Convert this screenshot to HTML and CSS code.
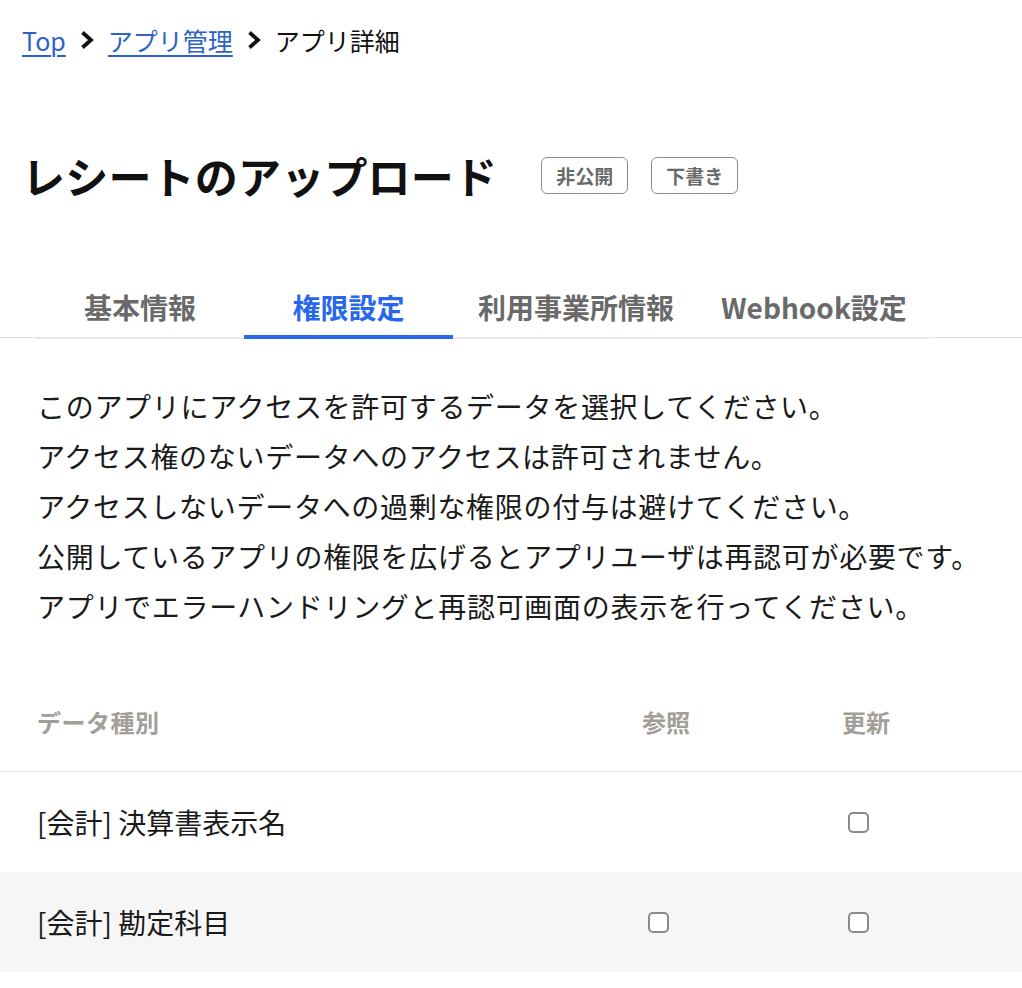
FILE: index.html
```html
<!DOCTYPE html>
<html lang="ja">
<head>
<meta charset="utf-8">
<link rel="stylesheet" href="styles.css">
</head>
<body>
<nav class="breadcrumb">
  <a class="crumb-link" href="#">Top</a>
  <svg class="chev" width="14" height="18" viewBox="0 0 14 18"><polyline points="2.5,1.5 11,9 2.5,16.5" fill="none" stroke="#111" stroke-width="3.8" stroke-linejoin="miter"/></svg>
  <a class="crumb-link" href="#">アプリ管理</a>
  <svg class="chev" width="14" height="18" viewBox="0 0 14 18"><polyline points="2.5,1.5 11,9 2.5,16.5" fill="none" stroke="#111" stroke-width="3.8" stroke-linejoin="miter"/></svg>
  <span class="crumb-current">アプリ詳細</span>
</nav>

<header class="page-header">
  <h1 class="title">レシートのアップロード</h1>
  <div class="badges">
    <span class="badge">非公開</span>
    <span class="badge">下書き</span>
  </div>
</header>

<div class="tabs-wrap">
  <div class="tabs">
    <div class="tab">基本情報</div>
    <div class="tab active">権限設定</div>
    <div class="tab">利用事業所情報</div>
    <div class="tab">Webhook設定</div>
  </div>
</div>

<div class="desc">
  <p>このアプリにアクセスを許可するデータを選択してください。</p>
  <p>アクセス権のないデータへのアクセスは許可されません。</p>
  <p>アクセスしないデータへの過剰な権限の付与は避けてください。</p>
  <p>公開しているアプリの権限を広げるとアプリユーザは再認可が必要です。</p>
  <p>アプリでエラーハンドリングと再認可画面の表示を行ってください。</p>
</div>

<div class="table">
  <div class="row head">
    <div class="cell name">データ種別</div>
    <div class="cell col">参照</div>
    <div class="cell col">更新</div>
  </div>
  <div class="row">
    <div class="cell name">[会計] 決算書表示名</div>
    <div class="cell col check"></div>
    <div class="cell col check"><input type="checkbox" class="cb"></div>
  </div>
  <div class="row alt">
    <div class="cell name">[会計] 勘定科目</div>
    <div class="cell col check"><input type="checkbox" class="cb"></div>
    <div class="cell col check"><input type="checkbox" class="cb"></div>
  </div>
</div>
</body>
</html>
```

FILE: styles.css
```css
* { box-sizing: border-box; }
body {
  margin: 0;
  background: #fff;
  color: #111;
  font-family: "Noto Sans CJK JP", "Noto Sans", sans-serif;
}
.breadcrumb {
  display: flex;
  align-items: center;
  gap: 14px;
  padding: 22px 22px 0;
  height: 58px;
  font-size: 25px;
  line-height: 36px;
}
.crumb-link {
  color: #2f62c8;
  text-decoration: underline;
  text-underline-offset: 4px;
  text-decoration-thickness: 2px;
}
.crumb-current { color: #111; }
.chev { display: block; flex: none; }

.page-header {
  display: flex;
  align-items: center;
  margin-top: 87px;
  padding-left: 22px;
  height: 60px;
}
.title {
  margin: 0;
  font-size: 43px;
  font-weight: 700;
  line-height: 60px;
  letter-spacing: 0.2px;
}
.badges {
  display: flex;
  gap: 23px;
  margin-left: 44px;
}
.badge {
  display: block;
  height: 37px;
  line-height: 35px;
  padding: 0 14px;
  border: 1px solid #8c8c8c;
  border-radius: 6px;
  font-size: 19px;
  font-weight: 700;
  color: #6a6a6a;
}

.tabs-wrap {
  margin-top: 82px;
  border-bottom: 1px solid #e2e2e2;
}
.tabs {
  display: flex;
  margin: 0 93px -2px 36px;
  border-bottom: 2px solid #e6e6e6;
}
.tab {
  min-width: 208px;
  padding: 0 22px 8px;
  margin-bottom: -2px;
  border-bottom: 4px solid transparent;
  text-align: center;
  font-size: 28px;
  font-weight: 700;
  line-height: 40px;
  color: #6a6a6a;
  white-space: nowrap;
}
.tab:nth-child(2) { min-width: 209px; }
.tab:nth-child(3) { min-width: 246px; }
.tab:nth-child(4) { min-width: 228px; }
.tab.active {
  color: #2767ee;
  border-bottom-color: #2a68ee;
}

.desc {
  margin-top: 43px;
  padding-left: 37px;
  font-size: 28px;
  line-height: 50px;
  letter-spacing: 0.7px;
  color: #1a1a1a;
}
.desc p { margin: 0; white-space: nowrap; }

.table { margin-top: 40px; }
.row {
  display: flex;
  align-items: center;
  height: 100px;
  padding: 0 56px 0 37px;
}
.row.head {
  border-bottom: 1px solid #e3e3e3;
  font-size: 24px;
  font-weight: 700;
  color: #a29e98;
  height: 101px;
}
.row.alt { background: #f6f6f6; }
.cell.name {
  flex: 1;
  font-size: 28px;
  color: #1a1a1a;
}
.row.head .cell.name { font-size: 24px; color: #a29e98; letter-spacing: 0.5px; }
.cell.col {
  width: 200px;
  text-align: center;
}
.cell.check {
  display: flex;
  justify-content: center;
  padding-right: 15px;
}
.cb {
  appearance: none;
  -webkit-appearance: none;
  margin: 0;
  width: 21px;
  height: 21px;
  border: 2px solid #8a8a8a;
  border-radius: 5px;
  background: #fff;
}
```
